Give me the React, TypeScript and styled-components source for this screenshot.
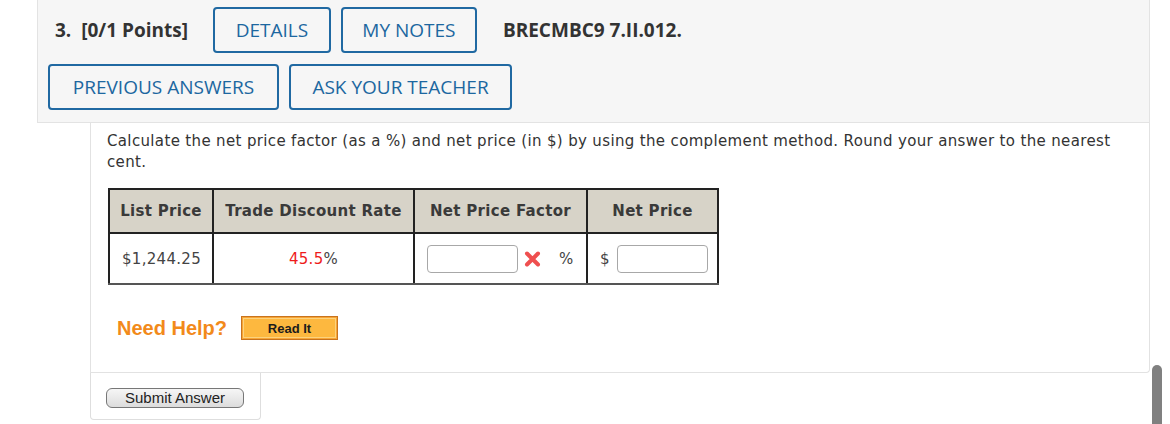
import React from "react";
import styled, { createGlobalStyle } from "styled-components";

const Global = createGlobalStyle`
  html, body { margin: 0; padding: 0; background: #ffffff; }
  body { width: 1170px; height: 424px; overflow: hidden; position: relative; }
  * { box-sizing: border-box; }
`;

const Page = styled.div`
  display: flex;
  flex-direction: column;
  align-items: flex-start;
`;

const HeaderPanel = styled.div`
  margin-left: 37px;
  width: 1113px;
  height: 123px;
  background: #f6f6f6;
  border: 1px solid #e3e3e3;
  border-top: none;
  display: flex;
  flex-direction: column;
  gap: 11px;
  padding-top: 7px;
`;

const HeaderRow = styled.div<{ $indent: number }>`
  display: flex;
  align-items: center;
  padding-left: ${(p) => p.$indent}px;
  gap: 10px;
  height: 46px;
`;

const QTitle = styled.span`
  font-family: "Open Sans", sans-serif;
  font-weight: 700;
  font-size: 19px;
  color: #333333;
  margin-right: 15px;
  white-space: pre;
`;

const Code = styled.span`
  font-family: "Open Sans", sans-serif;
  font-weight: 700;
  font-size: 19px;
  color: #333333;
  margin-left: 16px;
`;

const OutlineButton = styled.button<{ $w: number }>`
  width: ${(p) => p.$w}px;
  height: 46px;
  border: 2px solid #2069a2;
  border-radius: 4px;
  background: transparent;
  color: #1c67a0;
  font-family: "Open Sans", sans-serif;
  font-size: 19px;
  font-weight: 500;
  padding: 0;
  display: flex;
  align-items: center;
  justify-content: center;
`;

const ContentPanel = styled.div`
  margin-left: 90px;
  width: 1060px;
  height: 250px;
  border: 1px solid #e2e2e2;
  border-top: none;
  border-radius: 0 0 4px 0;
  padding: 8px 30px 0 16px;
  display: flex;
  flex-direction: column;
  align-items: flex-start;
`;

const Prompt = styled.p`
  margin: 0;
  font-family: "DejaVu Sans", Verdana, sans-serif;
  font-size: 15px;
  letter-spacing: 0.35px;
  line-height: 21px;
  color: #333333;
`;

const Table = styled.table`
  margin-top: 15px;
  margin-left: 1px;
  width: 609px;
  table-layout: fixed;
  border-collapse: collapse;
  font-family: "DejaVu Sans", Verdana, sans-serif;
  font-size: 15px;
  letter-spacing: 0.3px;
  color: #333333;
  border-bottom: 2px solid #555;
`;

const Th = styled.th<{ $w: number }>`
  width: ${(p) => p.$w}px;
  height: 44px;
  background: #d7d3c8;
  border: 2px solid #222;
  font-weight: 700;
  text-align: center;
  padding: 0;
  color: #3a3a3a;
`;

const Td = styled.td<{ $align?: string }>`
  height: 51px;
  border: 2px solid #222;
  border-bottom: 2px solid #555;
  padding: 0 12px;
  text-align: ${(p) => p.$align || "left"};
  color: #444;
`;

const Red = styled.span`
  color: #ee1c1c;
`;

const CellRow = styled.div`
  display: flex;
  align-items: center;
`;

const AnswerInput = styled.input`
  width: 91px;
  height: 28px;
  border: 1px solid #a8a8a8;
  border-radius: 4px;
  background: #fff;
  padding: 0;
  flex-shrink: 0;
`;

const Mark = styled.span`
  margin-left: 6px;
  display: inline-flex;
`;

const Unit = styled.span<{ $ml?: number; $mr?: number }>`
  margin-left: ${(p) => p.$ml || 0}px;
  margin-right: ${(p) => p.$mr || 0}px;
  color: #444;
`;

const HelpRow = styled.div`
  margin-top: 31px;
  margin-left: 10px;
  display: flex;
  align-items: center;
  gap: 14px;
`;

const NeedHelp = styled.span`
  font-family: "Liberation Sans", Arial, sans-serif;
  font-weight: 700;
  font-size: 20px;
  color: #f28a1a;
`;

const ReadIt = styled.button`
  width: 97px;
  height: 24px;
  background: #fdb83f;
  border: 1px solid #c8731e;
  box-shadow: inset 0 0 0 1px #f7a534, inset 0 0 0 2px #fcd27d;
  font-family: "Liberation Sans", Arial, sans-serif;
  font-weight: 700;
  font-size: 13px;
  color: #1c1c1c;
  padding: 0;
`;

const SubmitBox = styled.div`
  margin-left: 90px;
  width: 171px;
  height: 47px;
  border: 1px solid #dedede;
  border-top: none;
  border-radius: 0 0 4px 4px;
  padding: 15px 0 0 15px;
`;

const SubmitButton = styled.button`
  width: 138px;
  height: 20px;
  border: 1px solid #777;
  border-radius: 6px;
  background: linear-gradient(#f6f6f6, #dcdcdc);
  font-family: "Liberation Sans", Arial, sans-serif;
  font-size: 15px;
  color: #222;
  padding: 0;
  line-height: 18px;
`;

const Scrollbar = styled.div`
  position: absolute;
  left: 1152px;
  top: 365px;
  width: 10px;
  height: 70px;
  border-radius: 5px;
  background: #808080;
`;

const XMark = () => (
  <svg width="17" height="16" viewBox="0 0 17 16">
    <path d="M3 2.5 L14 13.5 M14 2.5 L3 13.5" stroke="#ef4f4f" strokeWidth="4" strokeLinecap="round" />
  </svg>
);

export default function App() {
  return (
    <>
      <Global />
      <Page>
        <HeaderPanel>
          <HeaderRow $indent={17}>
            <QTitle>3.  [0/1 Points]</QTitle>
            <OutlineButton $w={118}>DETAILS</OutlineButton>
            <OutlineButton $w={136}>MY NOTES</OutlineButton>
            <Code>BRECMBC9 7.II.012.</Code>
          </HeaderRow>
          <HeaderRow $indent={10}>
            <OutlineButton $w={231}>PREVIOUS ANSWERS</OutlineButton>
            <OutlineButton $w={223}>ASK YOUR TEACHER</OutlineButton>
          </HeaderRow>
        </HeaderPanel>
        <ContentPanel>
          <Prompt>
            Calculate the net price factor (as a %) and net price (in $) by using the complement method. Round your
            answer to the nearest cent.
          </Prompt>
          <Table>
            <thead>
              <tr>
                <Th $w={104}>List Price</Th>
                <Th $w={201}>Trade Discount Rate</Th>
                <Th $w={173}>Net Price Factor</Th>
                <Th $w={131}>Net Price</Th>
              </tr>
            </thead>
            <tbody>
              <tr>
                <Td>$1,244.25</Td>
                <Td $align="center">
                  <Red>45.5</Red>%
                </Td>
                <Td>
                  <CellRow>
                    <AnswerInput />
                    <Mark>
                      <XMark />
                    </Mark>
                    <Unit $ml={18}>%</Unit>
                  </CellRow>
                </Td>
                <Td>
                  <CellRow>
                    <Unit $mr={7}>$</Unit>
                    <AnswerInput />
                  </CellRow>
                </Td>
              </tr>
            </tbody>
          </Table>
          <HelpRow>
            <NeedHelp>Need Help?</NeedHelp>
            <ReadIt>Read It</ReadIt>
          </HelpRow>
        </ContentPanel>
        <SubmitBox>
          <SubmitButton>Submit Answer</SubmitButton>
        </SubmitBox>
      </Page>
      <Scrollbar />
    </>
  );
}
